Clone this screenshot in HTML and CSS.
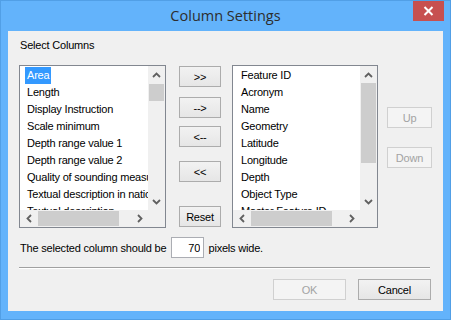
FILE: index.html
```html
<!DOCTYPE html>
<html lang="en">
<head>
  <meta charset="UTF-8">
  <title>Column Settings</title>
  <link rel="stylesheet" href="styles.css">
</head>
<body>
  <div class="window">
    <div class="titlebar">
      <span class="title">Column Settings</span>
      <button class="close-button">
        <svg width="11" height="10" viewBox="0 0 11 10"><path d="M1.5 1 L9.5 9 M9.5 1 L1.5 9" stroke="#fff" stroke-width="2"/></svg>
      </button>
    </div>

    <div class="client">
      <div class="label">Select Columns</div>

      <div class="main-row">
        <div class="listbox list-left">
          <div class="list-items">
            <div class="item"><span class="selected">Area</span></div>
            <div class="item">Length</div>
            <div class="item">Display Instruction</div>
            <div class="item">Scale minimum</div>
            <div class="item">Depth range value 1</div>
            <div class="item">Depth range value 2</div>
            <div class="item">Quality of sounding measurement</div>
            <div class="item">Textual description in national language</div>
            <div class="item">Textual description</div>
          </div>
          <div class="vscroll">
            <div class="arrow"><svg width="9" height="6" viewBox="0 0 9 6"><polyline points="1,5 4.5,1.5 8,5" fill="none" stroke="#606060" stroke-width="1.8"/></svg></div>
            <div class="track"><div class="thumb thumb-left"></div></div>
            <div class="arrow"><svg width="9" height="6" viewBox="0 0 9 6"><polyline points="1,1 4.5,4.5 8,1" fill="none" stroke="#606060" stroke-width="1.8"/></svg></div>
          </div>
          <div class="hscroll">
            <div class="arrow"><svg width="6" height="9" viewBox="0 0 6 9"><polyline points="5,1 1.5,4.5 5,8" fill="none" stroke="#606060" stroke-width="1.8"/></svg></div>
            <div class="track"><div class="hthumb"></div></div>
            <div class="arrow"><svg width="6" height="9" viewBox="0 0 6 9"><polyline points="1,1 4.5,4.5 1,8" fill="none" stroke="#606060" stroke-width="1.8"/></svg></div>
          </div>
          <div class="corner"></div>
        </div>

        <div class="move-buttons">
          <button class="btn btn-all-right">&gt;&gt;</button>
          <button class="btn btn-right">--&gt;</button>
          <button class="btn btn-left">&lt;--</button>
          <button class="btn btn-all-left">&lt;&lt;</button>
          <button class="btn btn-reset">Reset</button>
        </div>

        <div class="listbox list-right">
          <div class="list-items">
            <div class="item">Feature ID</div>
            <div class="item">Acronym</div>
            <div class="item">Name</div>
            <div class="item">Geometry</div>
            <div class="item">Latitude</div>
            <div class="item">Longitude</div>
            <div class="item">Depth</div>
            <div class="item">Object Type</div>
            <div class="item">Master Feature ID</div>
          </div>
          <div class="vscroll">
            <div class="arrow"><svg width="9" height="6" viewBox="0 0 9 6"><polyline points="1,5 4.5,1.5 8,5" fill="none" stroke="#606060" stroke-width="1.8"/></svg></div>
            <div class="track"><div class="thumb thumb-right"></div></div>
            <div class="arrow"><svg width="9" height="6" viewBox="0 0 9 6"><polyline points="1,1 4.5,4.5 8,1" fill="none" stroke="#606060" stroke-width="1.8"/></svg></div>
          </div>
          <div class="hscroll">
            <div class="arrow"><svg width="6" height="9" viewBox="0 0 6 9"><polyline points="5,1 1.5,4.5 5,8" fill="none" stroke="#606060" stroke-width="1.8"/></svg></div>
            <div class="track"><div class="hthumb"></div></div>
            <div class="arrow"><svg width="6" height="9" viewBox="0 0 6 9"><polyline points="1,1 4.5,4.5 1,8" fill="none" stroke="#606060" stroke-width="1.8"/></svg></div>
          </div>
          <div class="corner"></div>
        </div>

        <div class="order-buttons">
          <button class="btn btn-up" disabled>Up</button>
          <button class="btn btn-down" disabled>Down</button>
        </div>
      </div>

      <div class="width-row">
        <span>The selected column should be</span>
        <input class="width-input" type="text" value="70">
        <span>pixels wide.</span>
      </div>

      <div class="separator"></div>

      <div class="dialog-buttons">
        <button class="btn btn-dialog" disabled>OK</button>
        <button class="btn btn-dialog">Cancel</button>
      </div>
    </div>
  </div>
</body>
</html>
```

FILE: styles.css
```css
body { margin: 0; background: #fff; font-family: "Liberation Sans", Arial, sans-serif; font-size: 11px; color: #000; }

.window {
  width: 451px;
  height: 320px;
  box-sizing: border-box;
  background: #63b3fb;
  border: 1px solid #519fe6;
  position: relative;
}
.titlebar {
  height: 30px;
  display: flex;
  align-items: center;
  justify-content: center;
}
.title { font-family: "Open Sans", "Noto Sans", sans-serif; font-size: 14.5px; color: #2d2d2d; margin-top: -1px; }
.close-button {
  position: absolute;
  top: 0;
  right: 6px;
  width: 31px;
  height: 20px;
  border: none;
  padding: 0;
  background: #c75050;
  display: flex;
  align-items: center;
  justify-content: center;
}

.client {
  margin: 0 7px;
  height: 280px;
  background: #f0f0f0;
  padding-top: 8px;
  box-sizing: border-box;
}
.label { line-height: 13px; padding-left: 12px; letter-spacing: -0.2px; }

.main-row { display: flex; align-items: flex-start; margin-top: 13px; padding-left: 11px; }

.listbox {
  height: 163px;
  box-sizing: border-box;
  border: 1px solid #828790;
  background: #fff;
  display: grid;
  grid-template-columns: 1fr 17px;
  grid-template-rows: 1fr 17px;
}
.list-left { width: 147px; }
.list-right { width: 146px; margin-left: 11px; }

.list-items { overflow: hidden; padding-top: 1px; }
.item { line-height: 17px; height: 17px; white-space: nowrap; padding-left: 7px; letter-spacing: -0.2px; }
.list-right .item { padding-left: 8px; }
.selected { background: #3399ff; color: #fff; margin-left: -2px; padding: 0 2px; display: inline-block; line-height: 17px; }

.vscroll { background: #f0f0f0; display: flex; flex-direction: column; }
.vscroll .arrow { height: 17px; display: flex; align-items: center; justify-content: center; }
.vscroll .track { flex: 1; }
.thumb { background: #cdcdcd; margin: 0 1px; }
.thumb-left { height: 17px; margin-top: 1px; }
.thumb-right { height: 80px; }

.hscroll { background: #f0f0f0; display: flex; }
.hscroll .arrow { width: 17px; display: flex; align-items: center; justify-content: center; }
.hscroll .track { flex: 1; display: flex; align-items: stretch; padding: 1px 0; }
.hthumb { background: #cdcdcd; width: 81px; margin-left: 1px; }
.corner { background: #f0f0f0; }

.btn {
  font-family: "Liberation Sans", Arial, sans-serif;
  font-size: 11px;
  letter-spacing: -0.2px;
  height: 21px;
  padding: 0;
  border: 1px solid #acacac;
  background: linear-gradient(#f2f2f2, #e6e6e6);
  color: #000;
}
.btn:disabled { border-color: #d0d0d0; background: #f4f4f4; color: #a3a3a3; }

.move-buttons { display: flex; flex-direction: column; width: 42px; margin-left: 13px; }
.btn-all-right { margin-top: 1px; }
.btn-right { margin-top: 10px; }
.btn-left { margin-top: 8px; }
.btn-all-left { margin-top: 14px; }
.btn-reset { margin-top: 24px; }

.order-buttons { display: flex; flex-direction: column; width: 45px; margin-left: 9px; }
.btn-up { margin-top: 42px; }
.btn-down { margin-top: 19px; }

.width-row { display: flex; align-items: center; height: 21px; margin-top: 9px; padding-left: 12px; letter-spacing: -0.2px; }
.width-input {
  width: 33px;
  height: 21px;
  box-sizing: border-box;
  margin: 0 4px 0 5px;
  border: 1px solid #abadb3;
  text-align: right;
  padding: 0 3px 0 0;
  font-family: "Liberation Sans", Arial, sans-serif;
  font-size: 11px;
}

.separator { margin: 9px 0 0 11px; width: 411px; border-top: 1px solid #a0a0a0; border-bottom: 1px solid #fff; }

.dialog-buttons { display: flex; justify-content: flex-end; gap: 12px; padding-right: 12px; margin-top: 10px; }
.btn-dialog { width: 73px; }
```
